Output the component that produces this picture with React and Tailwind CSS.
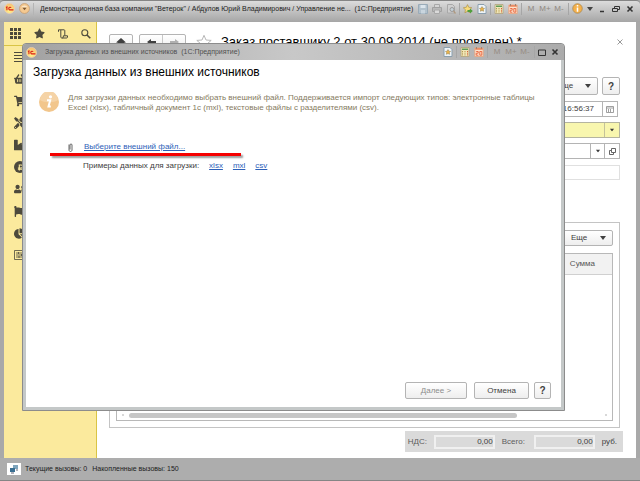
import React from "react";
import {
  FaStar, FaShoppingBasket, FaShoppingCart, FaTools, FaIndustry,
  FaRubleSign, FaUserFriends, FaFlag, FaChartPie,
} from "react-icons/fa";

function OneCLogo() {
  return (
    <svg viewBox="0 0 12 12" className="size-[11px] shrink-0">
      <defs>
        <radialGradient id="logo" cx="50%" cy="80%" r="80%">
          <stop offset="0" stopColor="#fff08a" />
          <stop offset="1" stopColor="#f6c070" />
        </radialGradient>
      </defs>
      <circle cx="6" cy="6" r="5.500" fill="url(#logo)" stroke="#ecd0b4" strokeWidth=".8" />
      <path d="M2.200 5 3.200 4.400V8M7.800 5.200C7.300 4.300 5.200 4.200 5.200 6s1.300 1.500 1.900 1.500h3.200" fill="none" stroke="#dc1c14" strokeWidth="1.200" />
    </svg>
  );
}

function MenuOrb() {
  return (
    <svg viewBox="0 0 12 12" className="size-[11px] shrink-0">
      <circle cx="6" cy="6" r="5.400" fill="#f5c990" stroke="#c39a70" strokeWidth=".8" />
      <path d="M2.500 4.500a4 3.500 0 0 1 7 0z" fill="#fbe6c8" />
      <path d="M3.800 5.200h4.400L6 7.800z" fill="#7a5836" />
    </svg>
  );
}

function Floppy() {
  return (
    <svg viewBox="0 0 10 10" className="size-[10px]">
      <path d="M.5.5h9v9h-9z" fill="#b2c1cc" stroke="#9aabb8" />
      <path d="M2.500 1h5v3h-5z" fill="#dce5ec" />
      <path d="M3 6h4v3.500H3z" fill="#c9d5de" />
    </svg>
  );
}

function Printer() {
  return (
    <svg viewBox="0 0 10 10" className="size-[10px]">
      <path d="M2.500.5h5v3h-5z" fill="#d6d6d6" stroke="#a8a8a8" />
      <path d="M.5 3.500h9v4h-9z" fill="#b9b9b9" stroke="#a0a0a0" />
      <path d="M2.500 6h5v3.500h-5z" fill="#dadada" stroke="#a8a8a8" />
    </svg>
  );
}

function Preview() {
  return (
    <svg viewBox="0 0 10 10" className="size-[10px]">
      <path d="M1.500.5h5l2 2v6.500h-7z" fill="#cfcfcf" stroke="#a8a8a8" />
      <circle cx="6" cy="5.500" r="2" fill="#c5d0d6" stroke="#999" />
      <path d="m7.500 7 2 2.500" stroke="#b09a80" strokeWidth="1.300" />
    </svg>
  );
}

function StarAdd() {
  return (
    <svg viewBox="0 0 10 10" className="size-[10px]">
      <path d="m4.500.6 1.300 2.700 3 .4-2.200 2.100.6 3-2.700-1.500-2.600 1.500.5-3L.3 3.700l3-.4z" fill="#f7dc7c" stroke="#a88a3c" strokeWidth=".6" />
      <path d="M4.500 6h2.500V4.600L9.800 7 7 9.400V8H4.500z" fill="#4f9f3c" />
    </svg>
  );
}

function StarPage() {
  return (
    <svg viewBox="0 0 10 10" className="size-[10px]">
      <path d="M1 .5h6l2 2v7H1z" fill="#eef4f8" stroke="#8b9fae" />
      <path d="m5 2.600.8 1.600 1.700.2-1.200 1.200.3 1.700L5 6.500l-1.600.8.3-1.700-1.200-1.200 1.700-.2z" fill="#f0b445" stroke="#8f7a46" strokeWidth=".5" />
    </svg>
  );
}

function Calculator() {
  return (
    <svg viewBox="0 0 10 10" className="size-[10px]">
      <path d="M1 .5h8v9H1z" fill="#f1e6b8" stroke="#b0a27c" strokeWidth=".8" />
      <path d="M2 1.500h6v1.500H2z" fill="#5f9c57" />
      <path d="M2.500 4v5M5 4v5" stroke="#b29a52" strokeDasharray="1 .7" />
      <path d="M7.500 4v5" stroke="#d86038" strokeDasharray="1 .7" />
    </svg>
  );
}

function CalendarIcon() {
  return (
    <svg viewBox="0 0 10 10" className="size-[10px]">
      <path d="M.8 1h8.400v8.500H.8z" fill="#fde3cd" stroke="#e8a27c" strokeWidth=".8" />
      <path d="M1.200 1.200h7.600v1.500H1.200z" fill="#ea7c50" />
      <path d="M2.200 4.500h2v1.700h-2v2h2.200M5.800 8.200V4.500h2v3.700z" fill="none" stroke="#e8623a" strokeWidth=".9" />
      <path d="M2.500 0v2M7.500 0v2" stroke="#9c8474" />
    </svg>
  );
}

function InfoSmall() {
  return (
    <svg viewBox="0 0 12 12" className="size-[11px]">
      <circle cx="6" cy="6" r="5.200" fill="#f4b04a" stroke="#a9854c" strokeWidth=".8" />
      <path d="M6 2.200v1.600M6 5v4.500" stroke="#fff" strokeWidth="1.700" />
    </svg>
  );
}

function Caret({ className = "" }) {
  return (
    <svg viewBox="0 0 6 4" className={`h-[4px] w-[6px] shrink-0 ${className}`}>
      <path d="M0 0h6L3 4z" fill="currentColor" />
    </svg>
  );
}

function Divider() {
  return <span className="-mx-px h-3 w-px bg-[#a6a6a6]" />;
}

function IconButton({ label, className = "", children }) {
  return (
    <button type="button" aria-label={label} className={`flex shrink-0 items-center justify-center ${className}`}>
      {children}
    </button>
  );
}

const raised = "rounded-[2px] border border-[#b4b4b4] bg-linear-to-b from-white to-[#eeeeee] text-[#404040]";

function MemoryKeys({ className }) {
  return (
    <div className={`flex items-center text-[8px] leading-3 ${className}`}>
      <button type="button" className="w-3">M</button>
      <button type="button" className="w-4">M+</button>
      <button type="button" className="w-3">M-</button>
    </div>
  );
}

function TitleBar() {
  return (
    <header className="flex h-[22px] shrink-0 items-center rounded-t border-t border-[#858585] bg-linear-to-b from-[#dcdcdc] to-[#a6a6a6] pr-[6px] pb-[6px] pl-1">
      <OneCLogo />
      <span className="w-1" />
      <IconButton label="Главное меню"><MenuOrb /></IconButton>
      <span className="ml-[3px] h-3 w-px bg-[#b4b4b4]" />
      <h1 className="ml-[6px] min-w-0 flex-1 truncate text-[7px] leading-3 text-[#1c1c1c]">
        Демонстрационная база компании "Ветерок" / Абдулов Юрий Владимирович / Управление не... &nbsp;(1С:Предприятие)
      </h1>
      <div className="flex items-center gap-1">
        <IconButton label="Сохранить"><Floppy /></IconButton>
        <IconButton label="Печать"><Printer /></IconButton>
        <IconButton label="Просмотр"><Preview /></IconButton>
        <Divider />
        <IconButton label="В избранное"><StarAdd /></IconButton>
        <IconButton label="Избранное"><StarPage /></IconButton>
        <Divider />
        <IconButton label="Калькулятор"><Calculator /></IconButton>
        <IconButton label="Календарь"><CalendarIcon /></IconButton>
        <Divider />
        <MemoryKeys className="text-[#8f8880]" />
        <Divider />
        <IconButton label="Информация"><InfoSmall /></IconButton>
        <Caret className="text-[#444]" />
      </div>
      <WindowKeys />
    </header>
  );
}

function WindowKeys() {
  return (
    <div className="ml-[5px] flex items-center gap-[6px] text-[#333]">
      <IconButton label="Свернуть">
        <svg viewBox="0 0 8 8" className="size-2"><path d="M2 6.500h4" stroke="currentColor" strokeWidth="1.500" /></svg>
      </IconButton>
      <IconButton label="Восстановить">
        <svg viewBox="0 0 8 8" className="size-2"><path d="M2.500 3V1.500h5v3H6M.5 3.500h5v3h-5z" fill="none" stroke="currentColor" /></svg>
      </IconButton>
      <IconButton label="Закрыть">
        <svg viewBox="0 0 8 8" className="size-2"><path d="m1.500 1.500 5 5m0-5-5 5" stroke="currentColor" strokeWidth="1.600" /></svg>
      </IconButton>
    </div>
  );
}

function MenuGrid() {
  return (
    <svg viewBox="0 0 11 11" className="size-[11px]" fill="currentColor">
      {[0, 4, 8].map((y) => [0, 4, 8].map((x) => <path key={`${x}-${y}`} d={`M${x} ${y}h3v3h-3z`} />))}
    </svg>
  );
}

function HistoryScroll() {
  return (
    <svg viewBox="0 0 10 10" className="size-[10px]" fill="none" stroke="currentColor">
      <path d="M.5 2.800V.8h5.500c.5 0 .8.300.8.800v5M2.800 1v7c0 .6.300 1 .9 1h4.800c.6 0 1-.4 1-1V6.800H5.300V8c0 .6-.4 1-.9 1" />
    </svg>
  );
}

function Lines() {
  return (
    <svg viewBox="0 0 12 10" className="h-[10px] w-3"><path d="M0 .5h12M0 3.500h12M0 6.500h12M0 9.500h12" stroke="currentColor" /></svg>
  );
}

function Sliders() {
  return (
    <svg viewBox="0 0 12 10" className="h-[10px] w-3" fill="none" stroke="currentColor">
      <path d="M.5.5h11v9H.5zM2 3h8M2 5h8M2 7h8M4.500 2v2M7.500 4v2M5 6v2" strokeWidth=".8" />
    </svg>
  );
}

const sections = [
  ["Главное", <Lines />],
  ["Закупки", <FaShoppingBasket size={12} />],
  ["Продажи", <FaShoppingCart size={12} />],
  ["Сервис", <FaTools size={12} />],
  ["Производство", <FaIndustry size={12} />],
  ["Деньги", <span className="flex size-3 items-center justify-center rounded-full bg-[#4d4a3c] text-[#fbea9d]"><FaRubleSign size={7} /></span>],
  ["Персонал", <FaUserFriends size={12} />],
  ["Предприятие", <FaFlag size={11} />],
  ["Анализ", <FaChartPie size={11} />],
  ["Настройки", <Sliders />],
];

function Sidebar() {
  return (
    <aside className="w-[93px] shrink-0 border-r border-[#d9c445] bg-[#fbea9d] text-[#4d4a3c]">
      <div className="flex h-6 items-center gap-[13px] border-b border-[#d9c445] pl-[6px]">
        <IconButton label="Меню функций"><MenuGrid /></IconButton>
        <IconButton label="Избранное"><FaStar size={11} /></IconButton>
        <IconButton label="История"><HistoryScroll /></IconButton>
        <IconButton label="Поиск">
          <svg viewBox="0 0 10 10" className="size-[10px]" fill="none" stroke="currentColor"><circle cx="3.800" cy="3.800" r="3" strokeWidth="1.100" /><path d="m6 6 3.300 3.300" strokeWidth="1.600" /></svg>
        </IconButton>
      </div>
      <nav className="pl-[10px]">
        {sections.map(([name, icon]) => (
          <a key={name} href="#" aria-label={name} className="flex h-[22px] items-center">{icon}</a>
        ))}
      </nav>
    </aside>
  );
}

function OrderForm() {
  return (
    <main className="flex min-w-0 flex-1 flex-col bg-white pt-3 pr-[13px] pb-[6px] pl-3 text-[8px] text-[#3c3c3c]">
      <div className="flex h-[43px] shrink-0 items-start">
        <IconButton label="Начальная страница" className={`h-4 w-6 ${raised}`}>
          <svg viewBox="0 0 10 9" className="h-[9px] w-[10px]" fill="currentColor"><path d="m5 0 5 4.500H8.500V9h-2V6h-3v3h-2V4.500H0z" /></svg>
        </IconButton>
        <div className={`ml-[6px] flex h-4 w-[47px] ${raised}`}>
          <IconButton label="Назад" className="flex-1 border-r border-[#c8c8c8]">
            <svg viewBox="0 0 9 6" className="h-[6px] w-[9px]"><path d="M9 2v2H4v2L0 3l4-3v2z" fill="currentColor" /></svg>
          </IconButton>
          <IconButton label="Вперед" className="flex-1 text-[#b0b0b0]">
            <svg viewBox="0 0 9 6" className="h-[6px] w-[9px]"><path d="M0 2v2h5v2l4-3-4-3v2z" fill="currentColor" /></svg>
          </IconButton>
        </div>
        <IconButton label="Добавить в избранное" className="ml-[10px]">
          <svg viewBox="0 0 16 15" className="size-4"><path d="m8 .8 2 4.700 5.200.4-4 3.400 1.300 5L8 11.500l-4.500 2.800 1.300-5-4-3.400L6 5.500z" fill="none" stroke="#b8b8b8" /></svg>
        </IconButton>
        <h2 className="ml-[9px] min-w-0 flex-1 truncate text-[13px] leading-4 text-black">
          Заказ поставщику 2 от 30.09.2014 (не проведен) *
        </h2>
        <IconButton label="Закрыть форму" className="mt-[5px]">
          <svg viewBox="0 0 6 6" className="size-[6px]"><path d="m.5.5 5 5m0-5-5 5" stroke="#999" /></svg>
        </IconButton>
      </div>

      <div className="flex shrink-0 justify-end gap-1 pr-[3px]">
        <button type="button" className={`flex h-[18px] w-[50px] items-center justify-between pr-[6px] pl-2 ${raised}`}>
          Еще <Caret />
        </button>
        <button type="button" className={`h-[18px] w-[18px] text-[10px] font-bold ${raised}`}>?</button>
      </div>

      <div className="mt-[6px] mr-[5px] ml-auto flex h-4 w-[180px] shrink-0 border border-[#b4b4b4]">
        <input aria-label="Время" defaultValue="16:56:37" className="min-w-0 flex-1 pr-2 text-right" />
        <IconButton label="Выбрать дату" className="w-[15px] border-l border-[#b4b4b4]">
          <svg viewBox="0 0 8 7" className="h-[7px] w-2"><path d="M.5.5h7v6h-7zM.5 2h7M2.500 3v3M4.500 3v3" fill="none" stroke="#888" strokeWidth=".8" /></svg>
        </IconButton>
      </div>
      <div className="mt-[5px] mr-[3px] flex h-4 shrink-0 border border-[#b4b4a0] bg-[#f8f6ae]">
        <input aria-label="Контрагент" className="min-w-0 flex-1" />
        <IconButton label="Выбрать контрагента" className="w-[15px] border-l border-[#c4c29a]"><Caret className="scale-75" /></IconButton>
      </div>
      <div className="mt-[5px] mr-[3px] flex h-4 shrink-0 border border-[#b4b4b4]">
        <input aria-label="Договор" className="min-w-0 flex-1" />
        <IconButton label="Выбрать договор" className="w-[14px] border-l border-[#b4b4b4]"><Caret className="scale-75" /></IconButton>
        <IconButton label="Открыть договор" className="w-[15px] border-l border-[#b4b4b4]">
          <svg viewBox="0 0 7 7" className="size-[7px]"><path d="M2.500.5h4v4h-4zM2 2.500H.5v4h4V5" fill="none" stroke="#555" strokeWidth=".9" /></svg>
        </IconButton>
      </div>
      <input aria-label="Комментарий" readOnly className="mt-[6px] mr-[3px] h-[15px] shrink-0 border border-[#e0e0e0]" />

      <section className="mt-[42px] mr-[3px] flex min-h-0 flex-1 flex-col border border-[#c4c4c4] p-[6px] pt-[7px]">
        <button type="button" className={`ml-auto flex h-4 w-[50px] shrink-0 items-center justify-between pr-[6px] pl-[7px] ${raised}`}>
          Еще <Caret />
        </button>
        <div className="mt-[7px] flex min-h-0 flex-1 flex-col border border-[#b8b8b8]">
          <table className="w-full">
            <thead>
              <tr className="h-5 border-b border-[#d0d0d0] bg-[#f2f2f2]">
                <th className="pr-[17px] text-right font-normal text-[#555]">Сумма</th>
              </tr>
            </thead>
          </table>
          <div className="mt-auto mb-px flex h-2 items-center gap-[5px] px-[5px]">
            <span className="size-[2px] bg-[#d8d8d8]" />
            <span className="h-[5px] w-[80%] rounded-sm bg-[#c6c6c6]" />
            <span className="ml-auto size-[2px] bg-[#d8d8d8]" />
          </div>
        </div>
      </section>

      <div className="mt-[3px] ml-auto flex h-[21px] shrink-0 items-center bg-[#dadada] pr-[6px] pl-[3px]">
        <label htmlFor="vat" className="w-[26px] text-[#5c5c5c]">НДС:</label>
        <input id="vat" readOnly value="0,00" className="h-[14px] w-[61px] border-2 border-[#f0f0f0] bg-[#dadada] text-right" />
        <label htmlFor="total" className="ml-[7px] w-8 text-[#5c5c5c]">Всего:</label>
        <input id="total" readOnly value="0,00" className="h-[14px] w-[61px] border-2 border-[#f0f0f0] bg-[#dadada] text-right" />
        <span className="ml-[7px]">руб.</span>
      </div>
    </main>
  );
}

function ImportDialog() {
  return (
    <div role="dialog" aria-labelledby="import-title" className="absolute top-[43px] right-[75px] bottom-[70px] left-[22px] flex flex-col rounded-t border border-[#8c8c8c] bg-[#c4c8c8]">
      <div className="flex h-4 shrink-0 items-center rounded-t bg-linear-to-r from-[#a2a2a2] via-[#c8c8c8] to-[#ababab] pr-[5px] pl-[3px]">
        <OneCLogo />
        <p className="ml-2 min-w-0 flex-1 truncate text-[7px] leading-3 text-[#505050]">
          Загрузка данных из внешних источников &nbsp;(1С:Предприятие)
        </p>
        <div className="flex items-center gap-1">
          <IconButton label="Избранное"><StarPage /></IconButton>
          <Divider />
          <IconButton label="Калькулятор"><Calculator /></IconButton>
          <IconButton label="Календарь"><CalendarIcon /></IconButton>
          <Divider />
          <MemoryKeys className="text-[#978d84]" />
          <Divider />
          <IconButton label="Развернуть" className="text-[#333]">
            <svg viewBox="0 0 8 7" className="h-[7px] w-2"><path d="M.5 1h7v5.500h-7z" fill="none" stroke="currentColor" /></svg>
          </IconButton>
          <IconButton label="Закрыть" className="ml-px text-[#333]">
            <svg viewBox="0 0 8 8" className="size-2"><path d="m1.500 1.500 5 5m0-5-5 5" stroke="currentColor" strokeWidth="1.600" /></svg>
          </IconButton>
        </div>
      </div>
      <div className="mx-[3px] mb-[3px] flex min-h-0 flex-1 flex-col bg-white px-[7px] pt-1 pb-2 text-[8px] leading-[10px]">
        <h2 id="import-title" className="text-[12px] leading-4 text-black">Загрузка данных из внешних источников</h2>
        <div className="mt-3 flex gap-[9px] pl-[6px]">
          <svg viewBox="0 0 20 20" className="size-5 shrink-0">
            <circle cx="10" cy="10" r="10" fill="#f2c68c" />
            <path d="M1 8a9 9 0 0 1 18 0c-4 3-14 3-18 0z" fill="#f5d3a6" />
            <path d="M8 8.200h3.200l-1.700 6.300h2.300" fill="none" stroke="#fff" strokeWidth="2" />
            <circle cx="11.500" cy="4.800" r="1.600" fill="#fff" />
          </svg>
          <p className="pt-px text-[#857a5e]">
            Для загрузки данных необходимо выбрать внешний файл. Поддерживается импорт следующих типов: электронные таблицы Excel (xlsx), табличный документ 1с (mxl), текстовые файлы с разделителями (csv).
          </p>
        </div>
        <div className="mt-[29px] flex items-center pl-[35px]">
          <svg viewBox="0 0 5 9" className="mr-[11px] h-[9px] w-[5px]"><path d="M1 1.500v5.500c0 2 3 2 3 0V2c0-1.400-2-1.400-2 0v4.500" fill="none" stroke="#555" strokeWidth=".9" /></svg>
          <a href="#" className="text-[#2c60b8] underline">Выберите внешний файл...</a>
        </div>
        <div className="mt-px ml-[17px] h-[3px] w-[191px] bg-[#f50000] shadow-[2px_2px_2px_rgba(0,0,0,0.4)]" />
        <div className="mt-[5px] flex gap-[10px] pl-[50px] text-[#3c3c3c]">
          <span>Примеры данных для загрузки:</span>
          <a href="#" className="text-[#2c60b8] underline">xlsx</a>
          <a href="#" className="text-[#2c60b8] underline">mxl</a>
          <a href="#" className="text-[#2c60b8] underline">csv</a>
        </div>
        <div className="mt-auto flex justify-end pr-[3px]">
          <button type="button" disabled className={`h-[17px] w-[62px] ${raised}`}><span className="text-[#8c8c8c]">Далее &gt;</span></button>
          <button type="button" className={`ml-[7px] h-[17px] w-[55px] ${raised}`}>Отмена</button>
          <button type="button" className={`ml-[5px] h-[17px] w-[17px] text-[10px] font-bold ${raised}`}>?</button>
        </div>
      </div>
    </div>
  );
}

function StatusBar() {
  return (
    <footer className="flex h-[23px] shrink-0 items-center gap-1 border-b border-[#858585] bg-[#adadad] pl-[7px] text-[7px] text-[#1c1c1c]">
      <span className="flex h-3 w-[14px] items-center justify-center bg-white">
        <svg viewBox="0 0 10 9" className="h-[9px] w-[10px]"><path d="M4 0h5v4H4z" fill="#7fa5bd" /><path d="M1 3h5v4H1z" fill="#3a6f92" /><path d="M2 8h3M7 5h2" stroke="#667" /></svg>
      </span>
      <span>Текущие вызовы: 0</span>
      <span className="ml-px">Накопленные вызовы: 150</span>
    </footer>
  );
}

export default function App() {
  return (
    <div className="relative flex h-screen w-full flex-col overflow-hidden bg-[#a9a9a9] font-['Liberation_Sans',Arial,sans-serif]">
      <TitleBar />
      <div className="flex min-h-0 flex-1 border-x-4 border-[#a9a9a9]">
        <Sidebar />
        <OrderForm />
      </div>
      <StatusBar />
      <ImportDialog />
    </div>
  );
}
